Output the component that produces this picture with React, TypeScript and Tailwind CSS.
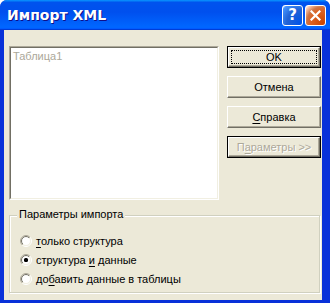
import React from "react";

const Radio: React.FC<{ checked?: boolean }> = ({ checked }) => (
  <svg width="12" height="12" viewBox="0 0 12 12" className="shrink-0">
    <defs>
      <linearGradient id="ro" x1="0" y1="0" x2="1" y2="1">
        <stop offset="50%" stopColor="#aca899" />
        <stop offset="50%" stopColor="#ffffff" />
      </linearGradient>
      <linearGradient id="ri" x1="0" y1="0" x2="1" y2="1">
        <stop offset="50%" stopColor="#716f64" />
        <stop offset="50%" stopColor="#f1efe2" />
      </linearGradient>
    </defs>
    <circle cx="6" cy="6" r="5.5" fill="none" stroke="url(#ro)" />
    <circle cx="6" cy="6" r="4.5" fill="#ffffff" stroke="url(#ri)" />
    {checked && <rect x="4" y="4" width="4" height="4" rx="1.5" fill="#000" />}
  </svg>
);

const Btn: React.FC<{
  children: React.ReactNode;
  def?: boolean;
  disabled?: boolean;
}> = ({ children, def, disabled }) => (
  <div
    className={
      "h-[22px] w-[94px] " +
      (def || disabled ? "border border-black" : "")
    }
  >
    <div className="h-full w-full border border-t-white border-l-white border-r-[#716f64] border-b-[#716f64] shadow-[inset_-1px_-1px_0_#aca899] bg-[#ece9d8] flex items-center justify-center relative">
      {def && (
        <div className="absolute inset-[2px] border border-dotted border-black" />
      )}
      <span
        className={
          disabled
            ? "text-[#aca899] [text-shadow:1px_1px_0_#fff]"
            : "text-black"
        }
      >
        {children}
      </span>
    </div>
  </div>
);

export default function App() {
  return (
    <div className="w-[330px] h-[303px] bg-white font-['Liberation_Sans',sans-serif] text-[11px] leading-none select-none">
      <div className="w-full h-full flex flex-col rounded-t-[7px] overflow-hidden bg-[#0831d9]">
        {/* title bar */}
        <div className="h-[30px] shrink-0 flex items-center pl-[7px] pr-[4px] bg-[linear-gradient(to_bottom,#0997ff_0%,#0053ee_8%,#0050ee_40%,#0066ff_88%,#0066ff_93%,#005bff_95%,#003dd7_96%,#003dd7_100%)]">
          <span className="text-white font-bold text-[14px] font-['DejaVu_Sans',sans-serif] [text-shadow:1px_1px_0_#0f1089]">
            Импорт XML
          </span>
          <div className="ml-auto flex gap-[2px]">
            <div className="w-[21px] h-[21px] rounded-[3px] border border-white bg-[radial-gradient(circle_at_90%_90%,#0054e9_0%,#2263d5_55%,#4494ff_90%,#ffffff_100%)] flex items-center justify-center text-white font-bold text-[15px] font-['DejaVu_Sans',sans-serif]">
              ?
            </div>
            <div className="w-[21px] h-[21px] rounded-[3px] border border-white bg-[radial-gradient(circle_at_90%_90%,#cc4600_0%,#dc6527_55%,#cd7546_68%,#ffccb2_90%,#ffffff_100%)] flex items-center justify-center">
              <svg width="11" height="11" viewBox="0 0 11 11">
                <path
                  d="M1.5 1.5 L9.5 9.5 M9.5 1.5 L1.5 9.5"
                  stroke="#fff"
                  strokeWidth="2.2"
                  strokeLinecap="square"
                />
              </svg>
            </div>
          </div>
        </div>
        {/* client */}
        <div className="flex-1 ml-[4px] mr-[8px] mb-[3px] bg-[#ece9d8] flex flex-col pl-[5px] pt-[16px]">
          <div className="flex gap-[8px]">
            <div className="w-[210px] h-[154px] border border-t-[#aca899] border-l-[#aca899] border-b-white border-r-white">
              <div className="w-full h-full border border-t-[#716f64] border-l-[#716f64] border-b-[#f1efe2] border-r-[#f1efe2] bg-white px-[2px] pt-[3px] text-[#aca899]">
                Таблица1
              </div>
            </div>
            <div className="flex flex-col gap-[8px]">
              <Btn def>OK</Btn>
              <Btn>Отмена</Btn>
              <Btn>
                <span className="underline underline-offset-2">С</span>правка
              </Btn>
              <Btn disabled>
                П<span className="underline underline-offset-2">а</span>раметры
                &gt;&gt;
              </Btn>
            </div>
          </div>
          {/* group box */}
          <div className="mt-[15px] w-[311px] h-[78px] border border-[#d0d0bf] shadow-[inset_1px_1px_0_#fff,1px_1px_0_#fff] relative flex flex-col gap-[7px] pl-[10px] pt-[19px]">
            <span className="absolute -top-[7px] left-[7px] bg-[#ece9d8] px-[2px]">
              Параметры импорта
            </span>
            <label className="flex items-center gap-[4px] h-[12px]">
              <Radio />
              <span>
                <span className="underline underline-offset-2">т</span>олько
                структура
              </span>
            </label>
            <label className="flex items-center gap-[4px] h-[12px]">
              <Radio checked />
              <span>
                структура <span className="underline underline-offset-2">и</span>{" "}
                данные
              </span>
            </label>
            <label className="flex items-center gap-[4px] h-[12px]">
              <Radio />
              <span>
                до<span className="underline underline-offset-2">б</span>авить
                данные в таблицы
              </span>
            </label>
          </div>
        </div>
      </div>
    </div>
  );
}
